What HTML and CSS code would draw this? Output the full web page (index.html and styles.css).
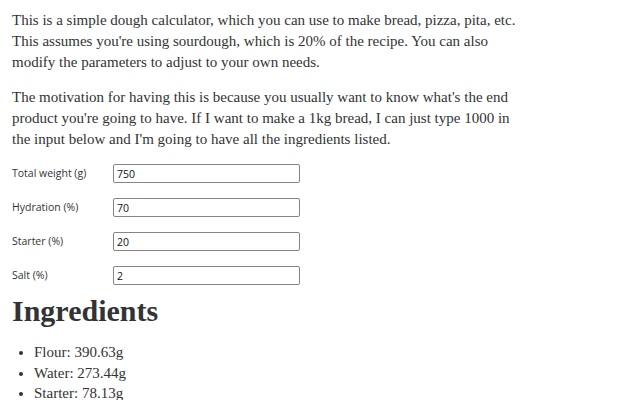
FILE: index.html
```html
<!DOCTYPE html>
<html>
<head>
<meta charset="utf-8">
<link rel="stylesheet" href="styles.css">
</head>
<body>
<main class="page">
  <p class="text">This is a simple dough calculator, which you can use to make bread, pizza, pita, etc. This assumes you're using sourdough, which is 20% of the recipe. You can also modify the parameters to adjust to your own needs.</p>
  <p class="text">The motivation for having this is because you usually want to know what's the end product you're going to have. If I want to make a 1kg bread, I can just type 1000 in the input below and I'm going to have all the ingredients listed.</p>
  <form class="form">
    <div class="row"><label class="label">Total weight (g)</label><input class="input" type="text" value="750"></div>
    <div class="row"><label class="label">Hydration (%)</label><input class="input" type="text" value="70"></div>
    <div class="row"><label class="label">Starter (%)</label><input class="input" type="text" value="20"></div>
    <div class="row"><label class="label">Salt (%)</label><input class="input" type="text" value="2"></div>
  </form>
  <h1 class="title">Ingredients</h1>
  <ul class="list">
    <li>Flour: 390.63g</li>
    <li>Water: 273.44g</li>
    <li>Starter: 78.13g</li>
    <li>Salt: 7.50g</li>
  </ul>
</main>
</body>
</html>
```
FILE: styles.css
```css
html, body { margin: 0; padding: 0; background: #fff; }
.page {
  padding: 10px 12px;
  color: #333;
  font-family: "Liberation Serif", serif;
  font-size: 15px;
  line-height: 21px;
  width: 512px;
}
.text { margin: 0 0 14px; }
.form { display: flex; flex-direction: column; gap: 15px; margin-top: 11px; }
.row { display: flex; align-items: center; height: 19px; }
.label {
  width: 101px;
  font-family: "Open Sans", sans-serif;
  font-size: 10.5px;
  line-height: 13px;
  color: #333;
}
.input {
  width: 187px;
  height: 19px;
  box-sizing: border-box;
  border: 1px solid #858585;
  border-radius: 2px;
  padding: 0 3px;
  font-family: "Open Sans", sans-serif;
  font-size: 10.5px;
  color: #111;
}
.title {
  font-size: 30px;
  line-height: 34px;
  font-weight: bold;
  margin: 9px 0 14px;
}
.list { margin: 0; padding-left: 22px; }
.list li { line-height: 20.5px; }
```
